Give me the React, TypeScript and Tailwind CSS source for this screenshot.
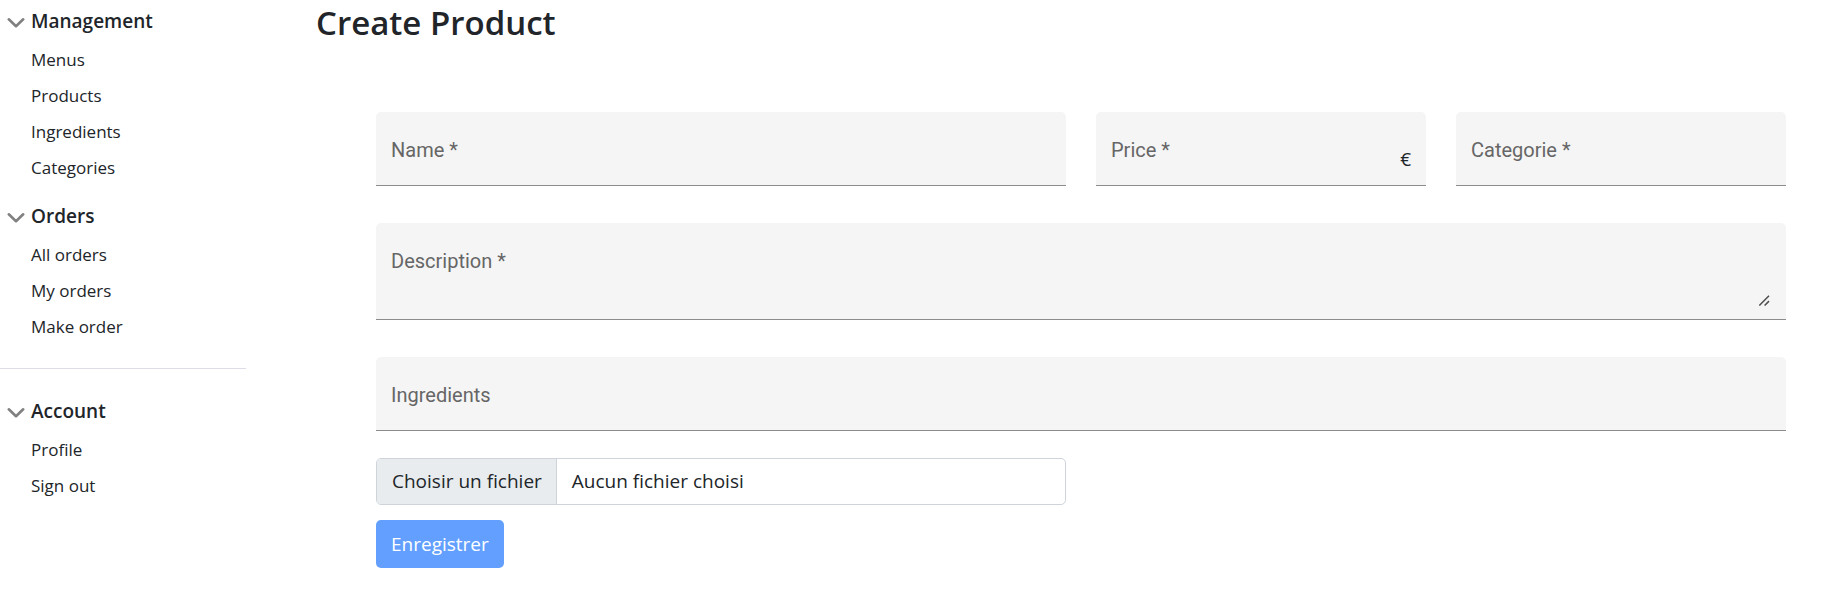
import { useState } from "react";
import type { ReactNode } from "react";

type Group = { title: string; items: string[] };

const mainGroups: Group[] = [
  { title: "Management", items: ["Menus", "Products", "Ingredients", "Categories"] },
  { title: "Orders", items: ["All orders", "My orders", "Make order"] },
];

const accountGroup: Group = { title: "Account", items: ["Profile", "Sign out"] };

function NavGroup({ title, items }: Group) {
  const [open, setOpen] = useState(true);
  return (
    <section className="pb-[9px]">
      <button
        type="button"
        aria-expanded={open}
        onClick={() => setOpen(!open)}
        className="flex h-[42px] items-center gap-1.5 pl-[7px] text-[19px] font-semibold"
      >
        <svg
          viewBox="0 0 18 12"
          className="mt-1 h-3 w-[18px]"
          fill="none"
          stroke="#808080"
          strokeWidth="2.6"
          strokeLinecap="round"
          strokeLinejoin="round"
          aria-hidden="true"
        >
          <path d="M1.8 2.3 L9 9.2 L16.2 2.3" />
        </svg>
        {title}
      </button>
      {open && (
        <ul>
          {items.map((item) => (
            <li key={item}>
              <a href="#" className="flex h-9 items-center pl-[31px] text-[17px]">
                {item}
              </a>
            </li>
          ))}
        </ul>
      )}
    </section>
  );
}

const control = "block w-full bg-transparent px-[15px] text-xl text-[#212529] outline-none";

function Field({
  id,
  label,
  className = "",
  children,
}: {
  id: string;
  label: string;
  className?: string;
  children: ReactNode;
}) {
  return (
    <div className={`relative rounded-t-[5px] border-b border-[#8c8c8c] bg-[#f5f5f5] ${className}`}>
      {children}
      <label
        htmlFor={id}
        className="pointer-events-none absolute left-[15px] top-6 font-[Roboto,sans-serif] text-xl leading-7 text-[#666666]"
      >
        {label}
      </label>
    </div>
  );
}

export default function App() {
  return (
    <div className="flex min-h-screen bg-white font-['Open_Sans',sans-serif] text-[#212529]">
      <nav className="w-[246px] shrink-0">
        {mainGroups.map((group) => (
          <NavGroup key={group.title} {...group} />
        ))}
        <hr className="mb-[21px] mt-3.5 border-[#dcdde6]" />
        <NavGroup {...accountGroup} />
      </nav>

      <main className="flex-1 pl-[70px] pr-10">
        <h1 className="text-[33px] font-semibold leading-[46px]">Create Product</h1>
        <form className="ml-[60px] mt-[66px]" onSubmit={(event) => event.preventDefault()}>
          <div className="grid grid-cols-4 gap-x-[30px] gap-y-[37px]">
            <Field id="name" label="Name *" className="col-span-2">
              <input id="name" type="text" className={`${control} h-[73px] pt-6`} />
            </Field>
            <Field id="price" label="Price *" className="flex items-center">
              <input id="price" type="text" inputMode="decimal" className={`${control} h-[73px] min-w-0 flex-1 pt-6`} />
              <span className="pr-[15px] pt-[22px] text-[19px]">€</span>
            </Field>
            <Field id="category" label="Categorie *">
              <select id="category" defaultValue="" className={`${control} h-[73px] appearance-none pt-6`}>
                <option value="" />
              </select>
            </Field>
            <Field id="description" label="Description *" className="col-span-4 px-[15px] pb-3 pt-6">
              <textarea
                id="description"
                className="block h-[60px] w-full resize-y bg-transparent text-xl outline-none [&::-webkit-resizer]:hidden"
              />
              <svg
                viewBox="0 0 11 11"
                className="pointer-events-none absolute bottom-[13px] right-4 size-[11px]"
                fill="none"
                stroke="#4d4d4d"
                strokeWidth="1.5"
                aria-hidden="true"
              >
                <path d="M0.3 10.5 L10 0.8 M5.6 10.5 L10 6.1" />
              </svg>
            </Field>
            <Field id="ingredients" label="Ingredients" className="col-span-4">
              <input id="ingredients" type="text" className={`${control} h-[73px] pt-6`} />
            </Field>
          </div>

          <div className="mt-[27px] grid grid-cols-4 gap-x-[30px]">
            <label
              htmlFor="picture"
              className="relative col-span-2 flex h-[47px] items-stretch overflow-hidden rounded-[5px] border border-[#ced4da] text-[19px]"
            >
              <span className="flex items-center border-r border-[#ced4da] bg-[#e9ecef] pl-[15px] pr-3.5">
                Choisir un fichier
              </span>
              <span className="flex items-center px-[15px]">Aucun fichier choisi</span>
              <input id="picture" type="file" className="sr-only" />
            </label>
          </div>

          <button
            type="submit"
            className="mt-[15px] h-12 rounded-[5px] bg-[#629fff] px-[15px] text-[19px] text-white"
          >
            Enregistrer
          </button>
        </form>
      </main>
    </div>
  );
}
